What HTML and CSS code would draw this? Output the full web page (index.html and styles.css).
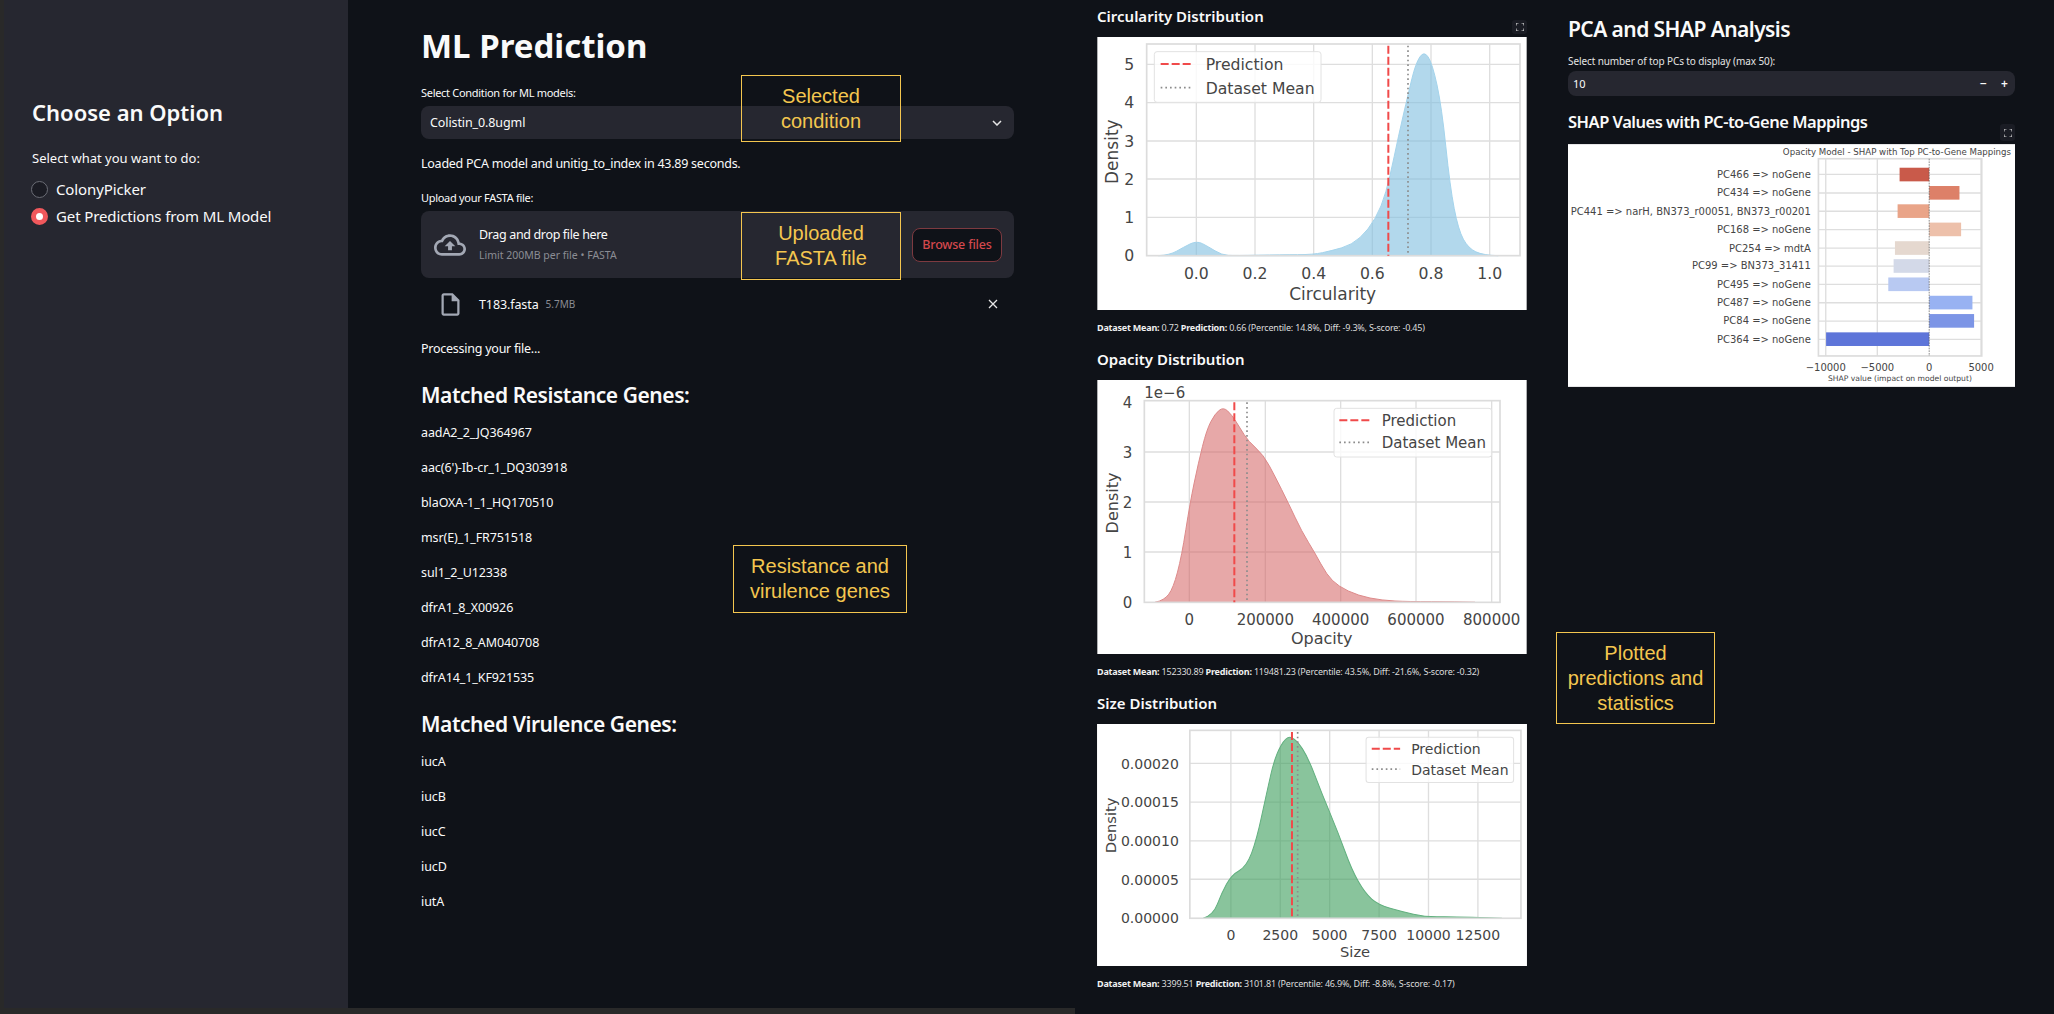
FILE: index.html
```html
<!DOCTYPE html>
<html lang="en">
  <head>
    <meta charset="UTF-8" />
    <title>ML Prediction</title>
    <link rel="stylesheet" href="styles.css">
  </head>
  <body>
    <div class="app">
      <div class="app-row">
        <aside class="sidebar">
          <h2 class="sidebar-title">Choose an Option</h2>
          <p class="radio-label">Select what you want to do:</p>
          <div class="radio-group">
            <div class="radio"><span class="radio-dot"></span>ColonyPicker</div>
            <div class="radio"><span class="radio-dot checked"></span>Get Predictions from ML Model</div>
          </div>
        </aside>

        <main class="main">
          <h1 class="page-title">ML Prediction</h1>
          <p class="field-label condition-label">Select Condition for ML models:</p>
          <div class="select-box">
            <span>Colistin_0.8ugml</span>
            <svg class="chevron" viewBox="0 0 10 6" width="10" height="6"><path d="M1 1l4 4 4-4" /></svg>
          </div>
          <p class="body-text load-text">Loaded PCA model and unitig_to_index in 43.89 seconds.</p>
          <p class="field-label upload-label">Upload your FASTA file:</p>
          <div class="upload-box">
            <svg class="upload-icon" viewBox="0 0 24 24" width="32" height="32">
              <path d="M19.35 10.04C18.67 6.59 15.64 4 12 4 9.11 4 6.6 5.64 5.35 8.04 2.34 8.36 0 10.91 0 14c0 3.31 2.69 6 6 6h13c2.76 0 5-2.24 5-5 0-2.64-2.05-4.78-4.65-4.96zM19 18H6c-2.21 0-4-1.79-4-4 0-2.05 1.53-3.76 3.56-3.97l1.07-.11.5-.95C8.08 7.14 9.94 6 12 6c2.62 0 4.88 1.86 5.39 4.43l.3 1.5 1.53.11c1.56.1 2.78 1.41 2.78 2.96 0 1.65-1.35 3-3 3zM8 13h2.55v3h2.9v-3H16l-4-4z" />
            </svg>
            <div class="upload-text">
              <span class="upload-main">Drag and drop file here</span>
              <span class="upload-hint">Limit 200MB per file • FASTA</span>
            </div>
            <button class="browse-button">Browse files</button>
          </div>
          <div class="file-row">
            <svg class="file-icon" viewBox="0 0 24 24" width="27" height="27">
              <path d="M14 2H6c-1.1 0-1.99.9-1.99 2L4 20c0 1.1.89 2 1.99 2H18c1.1 0 2-.9 2-2V8l-6-6zM6 20V4h7v5h5v11H6z" />
            </svg>
            <span class="file-name">T183.fasta</span>
            <span class="file-size">5.7MB</span>
            <svg class="file-close" viewBox="0 0 10 10" width="10" height="10"><path d="M1 1l8 8M9 1l-8 8" /></svg>
          </div>
          <p class="body-text processing-text">Processing your file...</p>
          <h2 class="section-title resistance-title">Matched Resistance Genes:</h2>
          <div class="gene-list resistance-list">
            <p>aadA2_2_JQ364967</p>
            <p>aac(6')-Ib-cr_1_DQ303918</p>
            <p>blaOXA-1_1_HQ170510</p>
            <p>msr(E)_1_FR751518</p>
            <p>sul1_2_U12338</p>
            <p>dfrA1_8_X00926</p>
            <p>dfrA12_8_AM040708</p>
            <p>dfrA14_1_KF921535</p>
          </div>
          <h2 class="section-title virulence-title">Matched Virulence Genes:</h2>
          <div class="gene-list virulence-list">
            <p>iucA</p>
            <p>iucB</p>
            <p>iucC</p>
            <p>iucD</p>
            <p>iutA</p>
          </div>
        </main>
      </div>
    </div>

    <section class="plots">
      <div class="plot-card">
        <h3 class="plot-title">Circularity Distribution</h3>
        <button class="expand-button">
          <svg viewBox="0 0 8 8" width="8" height="8"><path d="M0 2.500V0h2.500M5.500 0H8v2.500M8 5.500V8H5.500M2.500 8H0V5.500" /></svg>
        </button>
        <svg class="chart chart-tall" viewBox="67 111 1288 819">
          <rect class="chart-bg" x="67" y="111" width="1288" height="819" />
          <g class="grid">
            <path d="M364 132V767M540 132V767M716 132V767M892 132V767M1068 132V767M1244 132V767" />
            <path d="M215 652H1335M215 537H1335M215 423H1335M215 308H1335M215 193H1335" />
          </g>
          <path class="kde kde-blue" d="M250 767Q285 765 305 753.500Q325 742 345 732Q365 722 382.500 731Q400 740 420 752.500Q440 765 460 766Q480 767 550 765.500Q620 764 667.500 764Q715 764 742.500 758Q770 752 800 743.500Q830 735 855 712.500Q880 690 900 655Q920 620 932.500 575Q945 530 957.500 470Q970 410 985 345Q1000 280 1011 235Q1022 190 1034.500 171Q1047 152 1059.500 171Q1072 190 1086 255Q1100 320 1112.500 440Q1125 560 1137.500 625Q1150 690 1165 717.500Q1180 745 1202.500 755.500Q1225 766 1270 767Z" />
          <rect class="spine" x="215" y="132" width="1120" height="635" />
          <path class="pred-line" d="M940 137V767" />
          <path class="mean-line" d="M999 137V767" />
          <rect class="legend" x="238" y="155" width="500" height="152" rx="8" />
          <path class="pred-line" d="M257 192H355" />
          <path class="mean-line" d="M257 263H355" />
          <g class="chart-text size-47">
            <text x="392" y="211">Prediction</text>
            <text x="392" y="282">Dataset Mean</text>
            <g class="tick-x">
              <text x="364" y="838">0.0</text>
              <text x="540" y="838">0.2</text>
              <text x="716" y="838">0.4</text>
              <text x="892" y="838">0.6</text>
              <text x="1068" y="838">0.8</text>
              <text x="1244" y="838">1.0</text>
              <text class="size-51" x="773" y="900">Circularity</text>
            </g>
            <g class="tick-y">
              <text x="178" y="784">0</text>
              <text x="178" y="669">1</text>
              <text x="178" y="554">2</text>
              <text x="178" y="440">3</text>
              <text x="178" y="325">4</text>
              <text x="178" y="210">5</text>
            </g>
            <text class="axis-y size-51" transform="rotate(-90 130 455)" x="130" y="455">Density</text>
          </g>
        </svg>
        <p class="plot-caption"><b>Dataset Mean:</b> 0.72 <b>Prediction:</b> 0.66 (Percentile: 14.8%, Diff: -9.3%, S-score: -0.45)</p>
      </div>

      <div class="plot-card">
        <h3 class="plot-title">Opacity Distribution</h3>
        <svg class="chart chart-mid" viewBox="67 121 1288 822">
          <rect class="chart-bg" x="67" y="121" width="1288" height="822" />
          <g class="grid">
            <path d="M343 183V788M571 183V788M797 183V788M1023 183V788M1250 183V788" />
            <path d="M208 637H1275M208 487H1275M208 337H1275" />
          </g>
          <path class="kde kde-red" d="M240 788Q268 782 281.500 763.500Q295 745 307.500 697.500Q320 650 332.500 570Q345 490 357.500 430Q370 370 382.500 320Q395 270 407.500 246Q420 222 432.500 212Q445 202 457.500 213.500Q470 225 482.500 245Q495 265 507.500 285Q520 305 542.500 325Q565 345 582.500 377.500Q600 410 620 450Q640 490 660 532.500Q680 575 700 607.500Q720 640 737.500 672.500Q755 705 772.500 722.500Q790 740 820 754Q850 768 885 775Q920 782 960 784Q1000 786 1070 786Q1140 786 1200 788Z" />
          <rect class="spine" x="208" y="183" width="1067" height="605" />
          <path class="pred-line" d="M478 188V788" />
          <path class="mean-line" d="M516 188V788" />
          <rect class="legend" x="777" y="206" width="473" height="146" rx="8" />
          <path class="pred-line" d="M793 242H885" />
          <path class="mean-line" d="M793 308H885" />
          <g class="chart-text size-45">
            <text x="920" y="258">Prediction</text>
            <text x="920" y="325">Dataset Mean</text>
            <text x="208" y="175">1e−6</text>
            <g class="tick-x">
              <text x="343" y="856">0</text>
              <text x="571" y="856">200000</text>
              <text x="797" y="856">400000</text>
              <text x="1023" y="856">600000</text>
              <text x="1250" y="856">800000</text>
              <text class="size-48" x="740" y="913">Opacity</text>
            </g>
            <g class="tick-y">
              <text x="172" y="804">0</text>
              <text x="172" y="654">1</text>
              <text x="172" y="504">2</text>
              <text x="172" y="354">3</text>
              <text x="172" y="204">4</text>
            </g>
            <text class="axis-y size-48" transform="rotate(-90 128 490)" x="128" y="490">Density</text>
          </g>
        </svg>
        <p class="plot-caption"><b>Dataset Mean:</b> 152330.89 <b>Prediction:</b> 119481.23 (Percentile: 43.5%, Diff: -21.6%, S-score: -0.32)</p>
      </div>

      <div class="plot-card">
        <h3 class="plot-title">Size Distribution</h3>
        <svg class="chart chart-short" viewBox="67 133 1288 725">
          <rect class="chart-bg" x="67" y="133" width="1288" height="725" />
          <g class="grid">
            <path d="M468 152V715M616 152V715M764 152V715M912 152V715M1060 152V715M1208 152V715" />
            <path d="M345 598H1337M345 483H1337M345 367H1337M345 251H1337" />
          </g>
          <path class="kde kde-green" d="M385 715Q415 705 427.500 672.500Q440 640 455 612.500Q470 585 492.500 572.500Q515 560 530 520Q545 480 560 410Q575 340 587.500 285Q600 230 617.500 199Q635 168 650 174Q665 180 682.500 207.500Q700 235 720 287.500Q740 340 765 400Q790 460 810 515Q830 570 850 605Q870 640 890 657.500Q910 675 945 685Q980 695 1015 703Q1050 711 1090 710.500Q1130 710 1190 712Q1250 714 1280 715Z" />
          <rect class="spine" x="345" y="152" width="992" height="563" />
          <path class="pred-line" d="M651 157V715" />
          <path class="mean-line" d="M668 157V715" />
          <rect class="legend" x="873" y="173" width="442" height="135" rx="8" />
          <path class="pred-line" d="M890 207H975" />
          <path class="mean-line" d="M890 268H975" />
          <g class="chart-text size-42">
            <text x="1008" y="223">Prediction</text>
            <text x="1008" y="285">Dataset Mean</text>
            <g class="tick-x">
              <text x="468" y="780">0</text>
              <text x="616" y="780">2500</text>
              <text x="764" y="780">5000</text>
              <text x="912" y="780">7500</text>
              <text x="1060" y="780">10000</text>
              <text x="1208" y="780">12500</text>
              <text class="size-44" x="840" y="832">Size</text>
            </g>
            <g class="tick-y">
              <text x="312" y="730">0.00000</text>
              <text x="312" y="614">0.00005</text>
              <text x="312" y="499">0.00010</text>
              <text x="312" y="383">0.00015</text>
              <text x="312" y="267">0.00020</text>
            </g>
            <text class="axis-y size-44" transform="rotate(-90 125 437)" x="125" y="437">Density</text>
          </g>
        </svg>
        <p class="plot-caption"><b>Dataset Mean:</b> 3399.51 <b>Prediction:</b> 3101.81 (Percentile: 46.9%, Diff: -8.8%, S-score: -0.17)</p>
      </div>
    </section>

    <section class="shap">
      <h2 class="shap-title">PCA and SHAP Analysis</h2>
      <p class="shap-label">Select number of top PCs to display (max 50):</p>
      <div class="number-input">
        <span class="number-value">10</span>
        <span class="step">−</span>
        <span class="step">+</span>
      </div>
      <h3 class="shap-subtitle">SHAP Values with PC-to-Gene Mappings</h3>
      <div class="shap-figure">
        <button class="expand-button">
          <svg viewBox="0 0 8 8" width="8" height="8"><path d="M0 2.500V0h2.500M5.500 0H8v2.500M8 5.500V8H5.500M2.500 8H0V5.500" /></svg>
        </button>
        <svg class="chart chart-shap" viewBox="52 431 1344 730">
          <rect class="chart-bg" x="52" y="431" width="1344" height="730" />
          <g class="grid">
            <path d="M827 475V1068M982 475V1068M1294 475V1068" />
            <path d="M805 522H1296M805 578H1296M805 633H1296M805 688H1296M805 744H1296M805 798H1296M805 853H1296M805 908H1296M805 963H1296M805 1018H1296" />
          </g>
          <rect x="1049" y="502" width="89" height="41" fill="#c95a4a" />
          <rect x="1138" y="557" width="91" height="41" fill="#dd8068" />
          <rect x="1043" y="612" width="95" height="41" fill="#e9a488" />
          <rect x="1138" y="667" width="96" height="41" fill="#edc0aa" />
          <rect x="1035" y="723" width="103" height="41" fill="#e5d8cf" />
          <rect x="1031" y="777" width="107" height="41" fill="#d3d9e8" />
          <rect x="1015" y="832" width="123" height="41" fill="#b8c9f2" />
          <rect x="1138" y="887" width="130" height="41" fill="#98b2f2" />
          <rect x="1138" y="942" width="135" height="41" fill="#7c95e6" />
          <rect x="828" y="997" width="310" height="41" fill="#5e75d9" />
          <rect class="spine" x="805" y="475" width="491" height="593" />
          <path class="zero-line" d="M1138 475V1068" />
          <g class="chart-text size-30">
            <g class="tick-y">
              <text x="782" y="532">PC466 =&gt; noGene</text>
              <text x="782" y="588">PC434 =&gt; noGene</text>
              <text x="782" y="643">PC441 =&gt; narH, BN373_r00051, BN373_r00201</text>
              <text x="782" y="698">PC168 =&gt; noGene</text>
              <text x="782" y="754">PC254 =&gt; mdtA</text>
              <text x="782" y="808">PC99 =&gt; BN373_31411</text>
              <text x="782" y="863">PC495 =&gt; noGene</text>
              <text x="782" y="918">PC487 =&gt; noGene</text>
              <text x="782" y="973">PC84 =&gt; noGene</text>
              <text x="782" y="1028">PC364 =&gt; noGene</text>
            </g>
            <g class="tick-x">
              <text x="827" y="1112">−10000</text>
              <text x="982" y="1112">−5000</text>
              <text x="1138" y="1112">0</text>
              <text x="1294" y="1112">5000</text>
            </g>
          </g>
          <text class="chart-text shap-chart-title" x="1384" y="463">Opacity Model - SHAP with Top PC-to-Gene Mappings</text>
          <text class="chart-text shap-axis" x="1050" y="1144">SHAP value (impact on model output)</text>
        </svg>
      </div>
    </section>

    <!-- annotation boxes drawn over the app -->
    <div class="note note-condition">Selected<br>condition</div>
    <div class="note note-upload">Uploaded<br>FASTA file</div>
    <div class="note note-genes">Resistance and<br>virulence genes</div>
    <div class="note note-plots">Plotted<br>predictions and<br>statistics</div>
  </body>
</html>
```

FILE: styles.css
```css
:root {
  --bg: #0f1218;
  --panel: #262730;
  --text: #fafafa;
  --muted: #8b8d94;
  --icon: #a3a8b4;
  --note: #f4c64f;
}
*,
*::before,
*::after {
  box-sizing: border-box;
}
html,
body {
  height: 100%;
}
body {
  margin: 0;
  position: relative;
  display: flex;
  height: 1014px;
  overflow: hidden;
  background-color: var(--bg);
  color: var(--text);
  font-family: "Noto Sans", sans-serif;
}
p,
h1,
h2,
h3 {
  margin: 0;
}

/* left window: sidebar and main column */
.app {
  width: 1075px;
  flex: none;
  height: 100%;
  padding-left: 4px;
  background-color: #292929;
}
.app-row {
  display: flex;
  height: 1008px;
}
.sidebar {
  width: 344px;
  flex: none;
  padding: 96px 0 0 28px;
  background-color: var(--panel);
}
.sidebar-title {
  font-size: 22px;
  line-height: 32px;
  font-weight: 600;
}
.radio-label {
  margin-top: 20px;
  font-size: 13px;
  line-height: 20px;
}
.radio-group {
  margin-top: 11px;
  display: flex;
  flex-direction: column;
  gap: 7px;
}
.radio {
  display: flex;
  align-items: center;
  gap: 8px;
  font-size: 15px;
  line-height: 20px;
  letter-spacing: -0.12px;
  margin-left: -1px;
}
.radio-dot {
  width: 17px;
  height: 17px;
  border-radius: 50%;
  border: 1px solid #6b6d76;
  background-color: #1b1c24;
}
.radio-dot.checked {
  border: 5px solid #f0585c;
  background-color: #fff;
}

.main {
  flex: 1;
  padding: 24px 61px 0 73px;
  background-color: var(--bg);
}
.page-title {
  font-size: 33px;
  line-height: 44px;
  font-weight: 700;
}
.field-label {
  font-size: 11px;
  line-height: 16px;
  letter-spacing: -0.3px;
}
.condition-label {
  margin-top: 17px;
}
.select-box {
  margin-top: 5px;
  height: 33px;
  display: flex;
  align-items: center;
  justify-content: space-between;
  padding: 0 12px 0 9px;
  border-radius: 8px;
  background-color: var(--panel);
  font-size: 12.500px;
  letter-spacing: -0.1px;
}
.chevron {
  fill: none;
  stroke: #e6e6e6;
  stroke-width: 1.500;
}
.body-text {
  font-size: 12.500px;
  line-height: 20px;
  letter-spacing: -0.25px;
}
.load-text {
  margin-top: 15px;
}
.upload-label {
  margin-top: 16px;
}
.upload-box {
  margin-top: 5px;
  height: 67px;
  display: flex;
  align-items: center;
  padding: 0 12px 0 13px;
  border-radius: 8px;
  background-color: var(--panel);
}
.upload-icon {
  fill: var(--icon);
}
.upload-text {
  margin-left: 13px;
  display: flex;
  flex-direction: column;
  gap: 4px;
}
.upload-main {
  font-size: 12.500px;
  line-height: 17px;
  letter-spacing: -0.35px;
}
.upload-hint {
  font-size: 10.500px;
  line-height: 17px;
  color: var(--muted);
}
.browse-button {
  margin-left: auto;
  width: 90px;
  height: 34px;
  border: 1px solid #7d3a40;
  border-radius: 8px;
  background-color: var(--bg);
  color: #d4484d;
  font-family: inherit;
  font-size: 12.500px;
  font-weight: 500;
  letter-spacing: -0.2px;
}
.file-row {
  margin-top: 8px;
  height: 36px;
  display: flex;
  align-items: center;
  padding: 0 16px;
}
.file-icon {
  fill: var(--icon);
}
.file-name {
  margin-left: 15px;
  font-size: 12.500px;
  letter-spacing: -0.1px;
}
.file-size {
  margin-left: 7px;
  font-size: 10px;
  color: var(--muted);
}
.file-close {
  margin-left: auto;
  fill: none;
  stroke: #e6e6e6;
  stroke-width: 1.300;
}
.processing-text {
  margin-top: 17px;
}
.section-title {
  font-size: 21px;
  line-height: 32px;
  font-weight: 600;
  letter-spacing: -0.44px;
}
.resistance-title {
  margin-top: 20px;
}
.virulence-title {
  margin-top: 20px;
}
.gene-list {
  display: flex;
  flex-direction: column;
  gap: 15px;
}
.gene-list p {
  font-size: 12.500px;
  line-height: 20px;
  letter-spacing: -0.1px;
}
.resistance-list {
  margin-top: 12px;
}
.virulence-list {
  margin-top: 12px;
}

/* plots column */
.plots {
  width: 475px;
  flex: none;
  padding: 7px 0 0 22px;
  display: flex;
  flex-direction: column;
  gap: 15px;
}
.plot-card {
  position: relative;
  width: 430px;
}
.plot-title {
  font-size: 15px;
  line-height: 18px;
  font-weight: 600;
  margin-bottom: 12px;
}
.plot-card .expand-button {
  position: absolute;
  top: 13px;
  right: 0;
}
.expand-button {
  width: 15px;
  height: 14px;
  padding: 0;
  border: 0;
  border-radius: 3px;
  background-color: #1a1c24;
  display: flex;
  align-items: center;
  justify-content: center;
}
.expand-button svg {
  fill: none;
  stroke: #d6d6d6;
  stroke-width: 1.200;
}
.chart {
  display: block;
  width: 100%;
}
.chart-tall {
  height: 273px;
}
.chart-mid {
  height: 274px;
}
.chart-short {
  height: 242px;
}
.chart-shap {
  height: 243px;
}
.plot-caption {
  margin-top: 11px;
  font-size: 9px;
  line-height: 14px;
  letter-spacing: -0.2px;
  color: #dcdcdc;
}
.plot-caption b {
  font-weight: 700;
  color: #f0f0f0;
}

/* chart pieces */
.chart-bg {
  fill: #fff;
}
.grid path {
  fill: none;
  stroke: #dedede;
  stroke-width: 4;
}
.spine {
  fill: none;
  stroke: #dcdcdc;
  stroke-width: 5;
}
.kde {
  stroke-width: 3;
}
.kde-blue {
  fill: rgba(126, 190, 224, 0.6);
  stroke: #a4d4ec;
}
.kde-red {
  fill: rgba(212, 96, 96, 0.55);
  stroke: #dd8a8a;
}
.kde-green {
  fill: rgba(64, 160, 96, 0.62);
  stroke: #62b07f;
}
.pred-line {
  fill: none;
  stroke: #f04a4a;
  stroke-width: 6;
  stroke-dasharray: 24 9;
}
.mean-line {
  fill: none;
  stroke: #8c8c8c;
  stroke-width: 5;
  stroke-dasharray: 5 9;
}
.zero-line {
  fill: none;
  stroke: #555;
  stroke-width: 2;
  stroke-dasharray: 5 3;
}
.legend {
  fill: rgba(255, 255, 255, 0.8);
  stroke: #e2e2e2;
  stroke-width: 3;
}
.chart-text {
  font-family: "DejaVu Sans", sans-serif;
  fill: #454545;
}
.size-51 {
  font-size: 51px;
}
.size-48 {
  font-size: 48px;
}
.size-47 {
  font-size: 47px;
}
.size-45 {
  font-size: 45px;
}
.size-44 {
  font-size: 44px;
}
.size-42 {
  font-size: 42px;
}
.size-30 {
  font-size: 30px;
}
.tick-x text {
  text-anchor: middle;
}
.tick-y text {
  text-anchor: end;
}
.axis-y {
  text-anchor: middle;
}
.shap-chart-title {
  font-size: 26px;
  text-anchor: end;
}
.shap-axis {
  font-size: 23px;
  text-anchor: middle;
}

/* shap column */
.shap {
  flex: 1;
  padding: 13px 39px 0 18px;
}
.shap-title {
  font-size: 21px;
  line-height: 32px;
  font-weight: 600;
  letter-spacing: -0.57px;
}
.shap-label {
  margin-top: 9px;
  font-size: 10px;
  line-height: 14px;
  letter-spacing: -0.1px;
  color: #e4e4e4;
}
.number-input {
  margin-top: 3px;
  height: 25px;
  display: flex;
  align-items: center;
  padding-left: 5px;
  border-radius: 8px;
  background-color: var(--panel);
  font-size: 11px;
}
.number-value {
  flex: 1;
}
.step {
  width: 21px;
  text-align: center;
  font-size: 12px;
  font-weight: 600;
}
.shap-subtitle {
  margin-top: 13px;
  font-size: 16.500px;
  line-height: 26px;
  font-weight: 600;
  letter-spacing: -0.5px;
}
.shap-figure {
  position: relative;
  margin-top: 9px;
}
.shap-figure .expand-button {
  position: absolute;
  top: -20px;
  right: 0;
  width: 15px;
  height: 17px;
}

/* annotations */
.note {
  position: absolute;
  display: flex;
  align-items: center;
  justify-content: center;
  text-align: center;
  border: 1px solid var(--note);
  color: var(--note);
  font-family: "Liberation Sans", sans-serif;
  font-size: 20px;
  line-height: 25px;
}
.note-condition {
  left: 741px;
  top: 75px;
  width: 160px;
  height: 67px;
}
.note-upload {
  left: 741px;
  top: 212px;
  width: 160px;
  height: 68px;
}
.note-genes {
  left: 733px;
  top: 545px;
  width: 174px;
  height: 68px;
}
.note-plots {
  left: 1556px;
  top: 632px;
  width: 159px;
  height: 92px;
}
```
